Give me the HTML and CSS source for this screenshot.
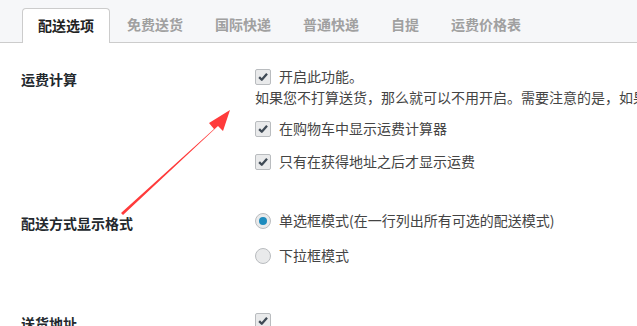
FILE: index.html
```html
<!DOCTYPE html>
<html lang="zh-CN">
<head>
<meta charset="utf-8">
<title>配送选项</title>
<link rel="stylesheet" href="styles.css">
</head>
<body>
<div class="page">
  <nav class="tabs">
    <a class="tab active">配送选项</a>
    <a class="tab">免费送货</a>
    <a class="tab">国际快递</a>
    <a class="tab">普通快递</a>
    <a class="tab">自提</a>
    <a class="tab">运费价格表</a>
  </nav>
  <div class="content">
    <div class="row row1">
      <div class="label">运费计算</div>
      <div class="field">
        <div class="line"><span class="cb"><svg viewBox="0 0 16 16"><path d="M3.6 8.2 L6.6 11.2 L12.6 4.2" fill="none" stroke="#3f4a55" stroke-width="2.6" stroke-linejoin="round"/></svg></span>开启此功能。</div>
        <div class="desc">如果您不打算送货，那么就可以不用开启。需要注意的是，如果您开启了此功能</div>
        <div class="line l2"><span class="cb"><svg viewBox="0 0 16 16"><path d="M3.6 8.2 L6.6 11.2 L12.6 4.2" fill="none" stroke="#3f4a55" stroke-width="2.6" stroke-linejoin="round"/></svg></span>在购物车中显示运费计算器</div>
        <div class="line l3"><span class="cb"><svg viewBox="0 0 16 16"><path d="M3.6 8.2 L6.6 11.2 L12.6 4.2" fill="none" stroke="#3f4a55" stroke-width="2.6" stroke-linejoin="round"/></svg></span>只有在获得地址之后才显示运费</div>
      </div>
    </div>
    <div class="row row2">
      <div class="label">配送方式显示格式</div>
      <div class="field">
        <div class="line"><span class="rb on"></span>单选框模式(在一行列出所有可选的配送模式)</div>
        <div class="line r2"><span class="rb"></span>下拉框模式</div>
      </div>
    </div>
    <div class="row row3">
      <div class="label">送货地址</div>
      <div class="field">
        <div class="line"><span class="cb"><svg viewBox="0 0 16 16"><path d="M3.6 8.2 L6.6 11.2 L12.6 4.2" fill="none" stroke="#3f4a55" stroke-width="2.6" stroke-linejoin="round"/></svg></span></div>
      </div>
    </div>
  </div>
  <svg class="arrow" width="637" height="326" viewBox="0 0 637 326">
    <path d="M121 213 L214 129 L209 123 L230 110 L223 131 L218 126 L123 215 Z" fill="#ff3b3b"/>
  </svg>
</div>
</body>
</html>
```

FILE: styles.css
```css
html, body {
  margin: 0;
  padding: 0;
  background: #ffffff;
}
body {
  font-family: "Noto Sans CJK SC", "Liberation Sans", sans-serif;
  font-size: 14px;
  color: #444;
  overflow: hidden;
  width: 637px;
  height: 326px;
}
.page {
  position: relative;
  width: 637px;
  height: 326px;
  overflow: hidden;
}
.tabs {
  display: flex;
  align-items: flex-end;
  height: 34px;
  padding: 8px 0 0 22px;
  background: #f6f7f9;
  border-bottom: 1px solid #cccccc;
}
.tab {
  display: block;
  box-sizing: border-box;
  height: 34px;
  line-height: 33px;
  padding: 0 16px;
  font-weight: 700;
  color: #a0a0a0;
  white-space: nowrap;
}
.tab.active {
  padding: 0 15px;
  background: #ffffff;
  border: 1px solid #cccccc;
  border-bottom: none;
  border-radius: 4px 4px 0 0;
  color: #222;
  height: 35px;
  line-height: 32px;
  margin-bottom: -1px;
}
.tab.active + .tab {
  margin-left: 1px;
}
.content {
  padding-left: 21px;
}
.row {
  display: flex;
}
.row1 { padding-top: 23px; }
.row2 { padding-top: 38px; }
.row3 { padding-top: 44px; }
.label {
  width: 234px;
  flex: none;
  font-weight: 700;
  color: #23282d;
  line-height: 21px;
  padding-top: 3px;
}
.field {
  flex: 1;
  white-space: nowrap;
}
.line {
  display: flex;
  align-items: center;
  height: 21px;
  line-height: 21px;
}
.desc {
  line-height: 21px;
  height: 21px;
}
.l2 { margin-top: 10px; }
.l3 { margin-top: 12px; }
.r2 { margin-top: 14px; }
.cb {
  box-sizing: border-box;
  width: 16px;
  height: 16px;
  border: 1px solid #b9bcbf;
  border-radius: 2px;
  background: #e9eaeb;
  margin-right: 8px;
  flex: none;
  display: flex;
}
.cb svg {
  width: 14px;
  height: 14px;
}
.rb {
  box-sizing: border-box;
  width: 16px;
  height: 16px;
  border: 1px solid #b9bcbf;
  border-radius: 50%;
  background: #e9eaeb;
  margin-right: 8px;
  flex: none;
  position: relative;
}
.rb.on::after {
  content: "";
  position: absolute;
  left: 3px;
  top: 3px;
  width: 8px;
  height: 8px;
  border-radius: 50%;
  background: #1e8cbe;
}
.arrow {
  position: absolute;
  left: 0;
  top: 0;
  pointer-events: none;
}
```
